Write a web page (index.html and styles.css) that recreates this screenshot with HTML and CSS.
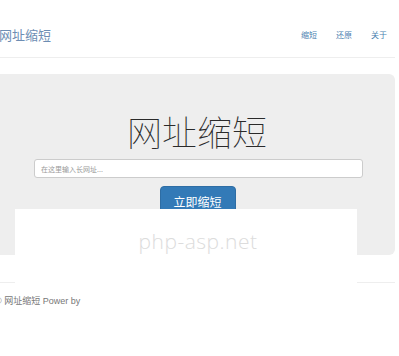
FILE: index.html
```html
<!DOCTYPE html>
<html lang="zh">
<head>
<meta charset="utf-8">
<title>网址缩短</title>
<link rel="stylesheet" href="styles.css">
</head>
<body>
<header class="navbar">
  <a class="brand">网址缩短</a>
  <nav class="nav">
    <a>缩短</a>
    <a>还原</a>
    <a>关于</a>
  </nav>
</header>
<section class="jumbotron">
  <h1 class="title">网址缩短</h1>
  <div class="field"><span class="placeholder">在这里输入长网址...</span></div>
  <div class="actions"><button class="btn">立即缩短</button></div>
</section>
<footer class="footer">
  <hr class="rule">
  <p class="copy">© 网址缩短 Power by</p>
</footer>
<div class="watermark"><span>php-asp.net</span></div>
</body>
</html>
```
FILE: styles.css
```css
html, body {
  margin: 0;
  padding: 0;
  background: #fff;
  font-family: "Liberation Sans", "Noto Sans CJK SC", sans-serif;
}
body {
  position: relative;
  width: 399px;
  height: 356px;
  overflow: hidden;
}
.navbar {
  height: 57px;
  border-bottom: 1px solid #eeeeee;
  margin-right: 4px;
  display: flex;
  align-items: center;
  justify-content: space-between;
  box-sizing: content-box;
}
.brand {
  font-family: "Noto Sans CJK SC", sans-serif;
  font-size: 13px;
  color: #6d8db3;
  margin-left: -1px;
  margin-top: 12px;
}
.nav {
  display: flex;
  gap: 19px;
  margin-right: 8px;
  margin-top: 12px;
}
.nav a {
  font-family: "Noto Sans CJK SC", sans-serif;
  font-size: 8px;
  color: #4a7fb0;
}
.jumbotron {
  margin-top: 16px;
  margin-right: 4px;
  height: 181px;
  background: #eeeeee;
  border-radius: 0 6px 6px 0;
  padding-top: 32px;
  box-sizing: border-box;
  display: flex;
  flex-direction: column;
  align-items: center;
}
.title {
  margin: 0;
  font-family: "Noto Sans CJK SC", sans-serif;
  font-weight: 100;
  font-size: 35px;
  line-height: 50px;
  color: #2a2a2a;
  margin-left: -1px;
}
.field {
  width: 329px;
  height: 19px;
  margin-top: 3px;
  margin-left: 2px;
  background: #fff;
  border: 1px solid #cccccc;
  border-radius: 3px;
  box-sizing: border-box;
  display: flex;
  align-items: center;
  padding-left: 6px;
}
.placeholder {
  font-family: "Noto Sans CJK SC", sans-serif;
  font-size: 7px;
  color: #9a9a9a;
}
.actions {
  margin-top: 8px;
}
.btn {
  width: 76px;
  height: 32px;
  background: #337ab7;
  border: 1px solid #2e6da4;
  border-radius: 4px;
  color: #fff;
  font-family: "Noto Sans CJK SC", sans-serif;
  font-size: 12px;
  line-height: 1;
  display: flex;
  justify-content: center;
  align-items: flex-start;
  padding: 9px 0 0 0;
}
.footer {
  margin-top: 27px;
}
.rule {
  margin: 0 4px 0 0;
  border: 0;
  border-top: 1px solid #eeeeee;
}
.copy {
  margin: 11px 0 0 -5px;
  font-family: "Liberation Sans", "Noto Sans CJK SC", sans-serif;
  font-size: 9px;
  color: #777;
}
.watermark {
  position: absolute;
  left: 15px;
  top: 209px;
  width: 342px;
  height: 80px;
  background: #fff;
  display: flex;
  justify-content: center;
}
.watermark span {
  margin-top: 18px;
  font-family: "Open Sans", "DejaVu Sans", sans-serif;
  font-weight: 300;
  font-size: 21px;
  color: #dcdcdc;
  margin-left: 24px;
  letter-spacing: 0.5px;
}
```
